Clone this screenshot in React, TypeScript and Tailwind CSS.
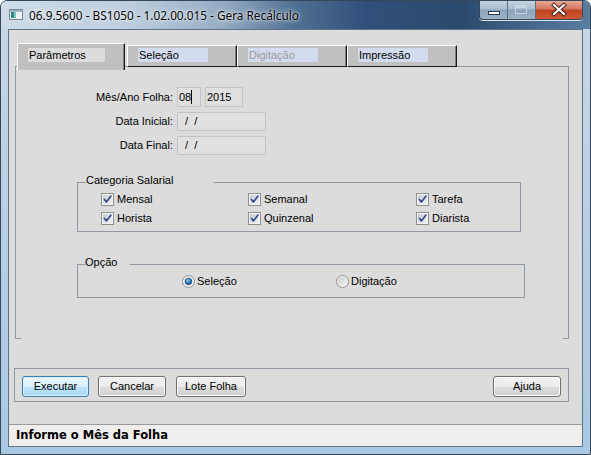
import React from 'react'

// shared grey-blue line colour for the page, group boxes and button panel
const rule = 'border-[#8d98a4]'

function CheckBox({ label }: { label: string }) {
  return (
    <div className="flex items-center gap-[3px] h-[13px]">
      <svg width="13" height="13" viewBox="0 0 13 13" className="shrink-0">
        <defs>
          <linearGradient id="cbFill" x1="0" y1="0" x2="1" y2="1">
            <stop offset="0" stopColor="#c9cdd2" />
            <stop offset="1" stopColor="#f2f2f2" />
          </linearGradient>
        </defs>
        <rect x="0.5" y="0.5" width="12" height="12" fill="#f4f4f4" stroke="#8e8f8f" />
        <rect x="2" y="2" width="9" height="9" fill="url(#cbFill)" />
        <path d="M3.3 6.3 L5.4 8.9 L9.8 3.2" fill="none" stroke="#35498c" strokeWidth="1.7" strokeLinecap="round" strokeLinejoin="round" />
      </svg>
      <span className="leading-[13px]">{label}</span>
    </div>
  )
}

function Radio({ label, checked }: { label: string; checked?: boolean }) {
  return (
    <div className="flex items-center gap-[2px] h-[13px]">
      <svg width="13" height="13" viewBox="0 0 13 13" className="shrink-0">
        <defs>
          <linearGradient id="rdFill" x1="0" y1="0" x2="1" y2="1">
            <stop offset="0" stopColor="#c6c9ce" />
            <stop offset="1" stopColor="#f6f6f6" />
          </linearGradient>
          <radialGradient id="rdDot" cx="0.4" cy="0.35" r="0.7">
            <stop offset="0" stopColor="#8fd0f5" />
            <stop offset="0.5" stopColor="#2f7fc0" />
            <stop offset="1" stopColor="#0f3f6e" />
          </radialGradient>
        </defs>
        <circle cx="6.5" cy="6.5" r="6" fill="#f4f4f4" stroke="#8e8f8f" />
        <circle cx="6.5" cy="6.5" r="4.5" fill="url(#rdFill)" />
        {checked && <circle cx="6.5" cy="6.5" r="3.3" fill="url(#rdDot)" stroke="#1b4f80" strokeWidth="0.6" />}
      </svg>
      <span className="leading-[13px]">{label}</span>
    </div>
  )
}

function Button({ label, w, primary }: { label: string; w: string; primary?: boolean }) {
  return (
    <div
      className={`${w} h-[21px] rounded-[3px] border flex items-center justify-center leading-none ${
        primary
          ? 'border-[#3c7fb1] bg-[linear-gradient(180deg,#eaf6fd_0%,#d9f0fc_50%,#bee6fd_50%,#a7d9f5_100%)] shadow-[inset_0_0_0_1px_#d6effc]'
          : 'border-[#707070] bg-[linear-gradient(180deg,#f2f2f2_0%,#ebebeb_50%,#dddddd_50%,#cfcfcf_100%)] shadow-[inset_0_0_0_1px_#fbfbfb]'
      }`}
    >
      {label}
    </div>
  )
}

function Field({ w, h, children }: { w: string; h: string; children?: React.ReactNode }) {
  return (
    <div className={`${w} ${h} border border-[#c4c4c4] bg-[#e0e0e0] pl-[1px] flex items-center whitespace-pre`}>
      {children}
    </div>
  )
}

function Tab({ label, active, disabled }: { label: string; active?: boolean; disabled?: boolean }) {
  if (active) {
    return (
      <div className="h-[27px] w-[108px] bg-[#c0c0c0] border-t border-l border-r border-t-white border-l-white border-r-[#1a1a1a] shadow-[inset_-1px_0_#808080]">
        <div className="ml-[10px] mt-[4px] w-[77px] h-[14px] leading-[14px] bg-[#dcdcdc] pl-[1px]">{label}</div>
      </div>
    )
  }
  return (
    <div className="mt-[2px] h-[22px] w-[110px] bg-[#c0c0c0] border border-t-white border-l-white border-r-[#1a1a1a] border-b-[#1a1a1a] shadow-[inset_-1px_0_#808080]">
      <div className={`ml-[10px] mt-[2px] w-[70px] h-[14px] leading-[14px] bg-[#d3dcef] pl-[1px] ${disabled ? 'text-[#9a9a9a]' : ''}`}>
        {label}
      </div>
    </div>
  )
}

export default function App() {
  return (
    <div className="w-[591px] h-[455px] flex flex-col rounded-t-[7px] overflow-hidden border border-[#34475c] bg-[linear-gradient(180deg,#c9d7e4_0%,#b6cde2_60%,#abc8e3_100%)] font-['Liberation_Sans',Arial,sans-serif] text-[11px] text-black">
      {/* title bar */}
      <div className="h-[28px] shrink-0 flex items-start bg-[linear-gradient(90deg,#cfdce8_0%,#bccddd_22%,#93abc3_38%,#4f6f92_50%,#30507a_62%,#2a4a6c_78%,#44678b_90%,#5a7ea0_100%)]">
        <svg width="14" height="11" viewBox="0 0 14 11" className="ml-[8px] mt-[8px] shrink-0">
          <rect x="0.5" y="0.5" width="13" height="10" fill="#eef1f3" stroke="#7a8794" />
          <rect x="1" y="1" width="12" height="2" fill="#9db3c6" />
          <rect x="2" y="3" width="3" height="6" fill="#2f8f7a" />
          <rect x="5" y="3" width="2" height="6" fill="#7fc3c9" />
        </svg>
        <span className="ml-[6px] mt-[6px] leading-[16px] font-['Noto_Sans',sans-serif] text-[11.8px] [text-shadow:0_0_6px_#ffffff,0_0_2px_#ffffff]">
          06.9.5600 - BS1050 - 1.02.00.015 - Gera Recálculo
        </span>
        <div className="ml-auto mr-[7px] flex h-[19px] rounded-b-[4px] border border-t-0 border-[#34475c] overflow-hidden shadow-[0_1px_0_#d8e3ec]">
          <div className="w-[28px] h-full border-r border-[#5a6c80] bg-[linear-gradient(180deg,#c5d3e0_0%,#a9bccf_45%,#8aa2b9_50%,#9fb4c8_100%)]">
            <svg width="27" height="18" viewBox="0 0 27 18">
              <rect x="8.5" y="10.5" width="11" height="3" fill="#ffffff" stroke="#28394b" />
            </svg>
          </div>
          <div className="w-[28px] h-full border-r border-[#5a6c80] bg-[linear-gradient(180deg,#c5d3e0_0%,#a9bccf_45%,#8aa2b9_50%,#9fb4c8_100%)]">
            <svg width="27" height="18" viewBox="0 0 27 18">
              <rect x="7.5" y="4.5" width="11" height="8" fill="none" stroke="#c6d2dd" />
              <rect x="8" y="5" width="10" height="2" fill="#c6d2dd" />
            </svg>
          </div>
          <div className="w-[46px] h-full bg-[linear-gradient(180deg,#e9a796_0%,#d3765f_45%,#c0401f_50%,#cf5a36_100%)]">
            <svg width="46" height="18" viewBox="0 0 46 18">
              <path d="M18 4 L28 13 M28 4 L18 13" stroke="#3a1a12" strokeWidth="4" strokeLinecap="square" />
              <path d="M18 4 L28 13 M28 4 L18 13" stroke="#ffffff" strokeWidth="2.2" strokeLinecap="square" />
            </svg>
          </div>
        </div>
      </div>

      {/* window body */}
      <div className="flex-1 flex px-[7px] pb-[7px] min-h-0">
        <div className="flex-1 flex flex-col border border-[#5f7186] bg-[#dcdcdc]">
          {/* tab control */}
          <div className="ml-[6px] mt-[13px] w-[554px]">
            <div className="relative z-10 flex items-start h-[24px] pl-[2px]">
              <Tab label="Parâmetros" active />
              <div className="w-[2px]" />
              <Tab label="Seleção" />
              <Tab label="Digitação" disabled />
              <Tab label="Impressão" />
            </div>
            <div className={`-mt-px h-[273px] border-x border-t ${rule} flex flex-col`}>
              {/* date fields */}
              <div className="mt-[20px] flex flex-col">
                <div className="flex items-center h-[20px]">
                  <span className="w-[157px] text-right">Mês/Ano Folha:</span>
                  <div className="ml-[4px] h-full">
                    <Field w="w-[24px]" h="h-full">
                      08<span className="inline-block w-px h-[14px] bg-black" />
                    </Field>
                  </div>
                  <div className="ml-[4px] h-full">
                    <Field w="w-[38px]" h="h-full">2015</Field>
                  </div>
                </div>
                <div className="flex items-center h-[19px] mt-[5px]">
                  <span className="w-[157px] text-right">Data Inicial:</span>
                  <div className="ml-[4px] h-full">
                    <Field w="w-[89px]" h="h-full">{'  /  /'}</Field>
                  </div>
                </div>
                <div className="flex items-center h-[19px] mt-[5px]">
                  <span className="w-[157px] text-right">Data Final:</span>
                  <div className="ml-[4px] h-full">
                    <Field w="w-[89px]" h="h-full">{'  /  /'}</Field>
                  </div>
                </div>
              </div>

              {/* Categoria Salarial */}
              <div className={`ml-[61px] mt-[27px] w-[444px] h-[50px] border ${rule}`}>
                <div className="-mt-[9px] ml-[8px] w-[128px] h-[13px] leading-[13px] bg-[#dcdcdc]">Categoria Salarial</div>
                <div className="mt-[6px] pl-[23px] grid grid-cols-[147px_168px_auto] gap-y-[6px]">
                  <CheckBox label="Mensal" />
                  <CheckBox label="Semanal" />
                  <CheckBox label="Tarefa" />
                  <CheckBox label="Horista" />
                  <CheckBox label="Quinzenal" />
                  <CheckBox label="Diarista" />
                </div>
              </div>

              {/* Opção */}
              <div className={`ml-[61px] mt-[32px] w-[448px] h-[34px] border ${rule}`}>
                <div className="-mt-[9px] ml-[7px] w-[45px] h-[13px] leading-[13px] bg-[#dcdcdc]">Opção</div>
                <div className="mt-[6px] pl-[104px] flex">
                  <div className="w-[154px]">
                    <Radio label="Seleção" checked />
                  </div>
                  <Radio label="Digitação" />
                </div>
              </div>

              <div className="mt-auto flex justify-between h-px">
                <div className="w-[5px] bg-[#8d98a4]" />
                <div className="w-[5px] bg-[#8d98a4]" />
              </div>
            </div>
          </div>

          {/* action buttons */}
          <div className={`ml-[5px] mt-[29px] w-[555px] h-[34px] border ${rule} flex items-start pt-[7px] px-[7px]`}>
            <Button label="Executar" w="w-[67px]" primary />
            <div className="w-[9px]" />
            <Button label="Cancelar" w="w-[68px]" />
            <div className="w-[10px]" />
            <Button label="Lote Folha" w="w-[70px]" />
            <div className="ml-auto">
              <Button label="Ajuda" w="w-[68px]" />
            </div>
          </div>

          {/* status bar */}
          <div className="mt-auto h-[22px] border-t border-[#9a9a9a] bg-[#f0eded] pl-[7px] flex items-center font-['DejaVu_Sans',Verdana,sans-serif] font-bold text-[11.5px]">
            Informe o Mês da Folha
          </div>
        </div>
      </div>
    </div>
  )
}
